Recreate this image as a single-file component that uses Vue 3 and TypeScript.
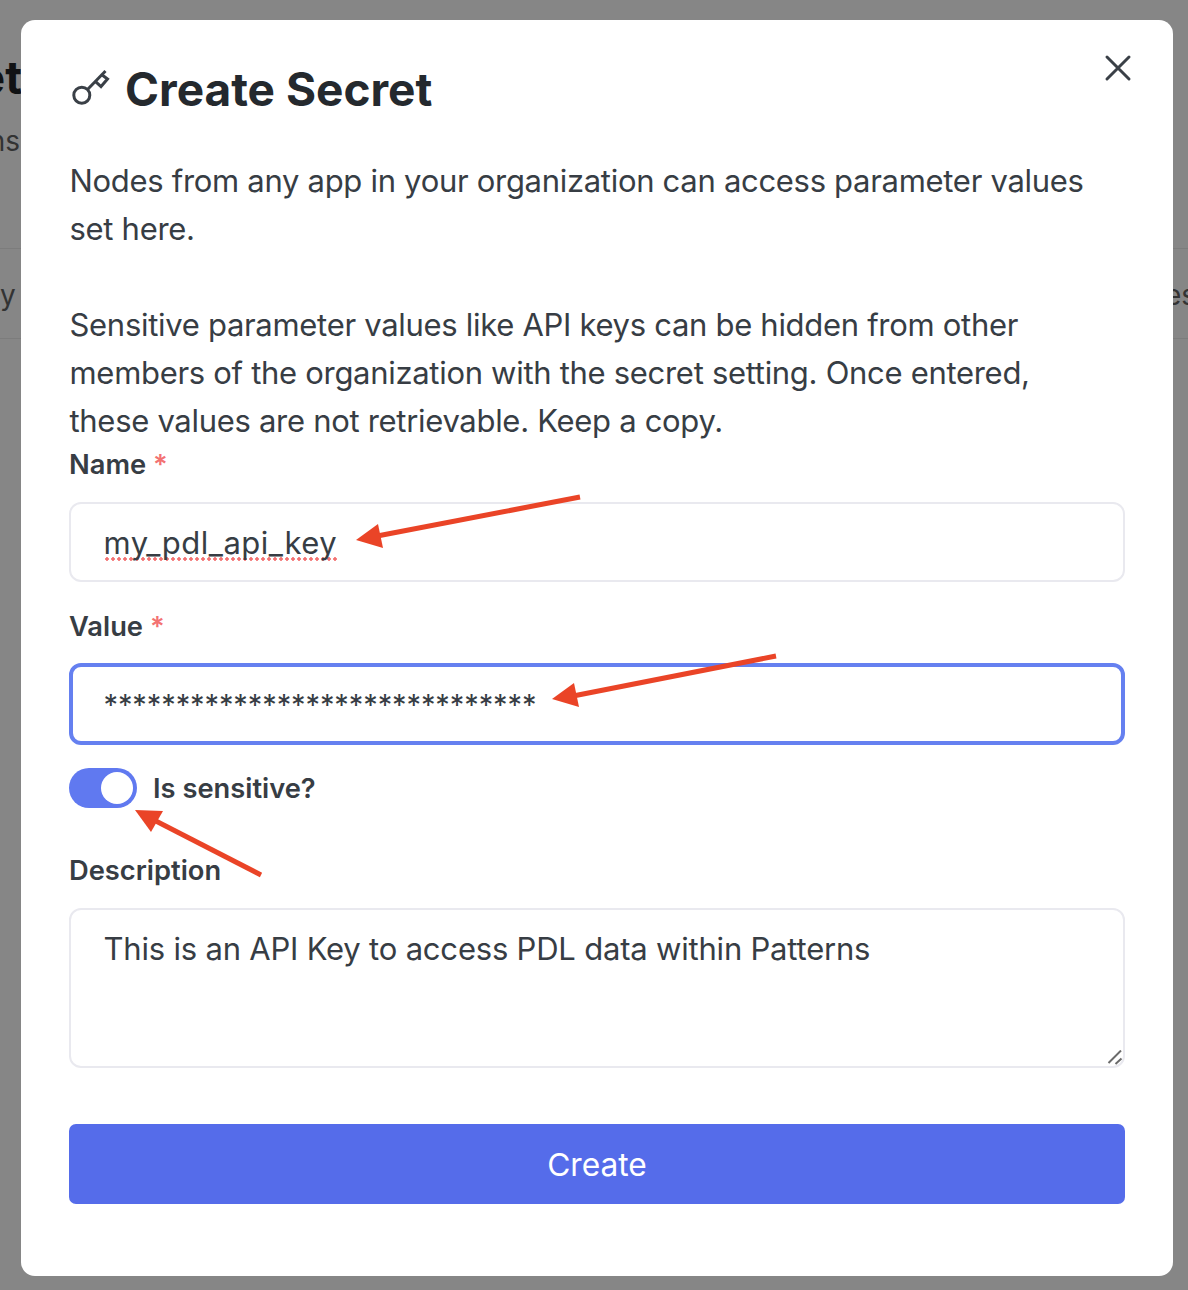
<template>
  <div class="page">
    <div class="behind">
      <span class="bg-title">et</span>
      <span class="bg-sub">ns</span>
      <span class="bg-line bg-line-top"></span>
      <span class="bg-line bg-line-bottom"></span>
      <span class="bg-cell bg-cell-left">y</span>
      <span class="bg-cell bg-cell-right">es</span>
    </div>

    <div class="modal">
      <button class="close" type="button" aria-label="Close">
        <svg width="28" height="28" viewBox="0 0 28 28" fill="none" stroke="#3a4047" stroke-width="3" stroke-linecap="round">
          <path d="M3 3 L25 25 M25 3 L3 25" />
        </svg>
      </button>

      <h1 class="title">
        <svg class="key" width="38" height="38" viewBox="0 0 38 38" fill="none" stroke="#3a4047" stroke-width="3">
          <circle cx="11.8" cy="25.2" r="8" />
          <path d="M17.5 19.5 L35.5 1" />
          <path d="M25.3 11.3 L31 16.5 L37.5 9 L31.5 4.5" />
        </svg>
        Create Secret
      </h1>

      <p class="intro">Nodes from any app in your organization can access parameter values set here.</p>
      <p class="intro gap">Sensitive parameter values like API keys can be hidden from other members of the organization with the secret setting. Once entered, these values are not retrievable. Keep a copy.</p>

      <label class="field-label name-label">Name <span class="req">*</span></label>
      <div class="text-input name-field"><span class="spell">my_pdl_api_key</span></div>

      <label class="field-label value-label">Value <span class="req">*</span></label>
      <input class="text-input focused" type="text" :value="maskedValue" spellcheck="false" />

      <div class="switch-row">
        <span class="switch"><span class="knob"></span></span>
        <span class="field-label switch-label">Is sensitive?</span>
      </div>

      <label class="field-label desc-label">Description</label>
      <div class="area-wrap">
        <textarea class="text-area" spellcheck="false">This is an API Key to access PDL data within Patterns</textarea>
        <svg class="grip" width="16" height="16" viewBox="0 0 16 16" stroke="#6b6b6b" stroke-width="2">
          <path d="M1.5 13 L14 0.5 M8.5 14 L14.5 8.5" />
        </svg>
      </div>

      <button class="create" type="button">Create</button>
    </div>

    <svg class="arrows" width="1188" height="1290" viewBox="0 0 1188 1290">
      <g v-for="a in arrows" :key="a.head">
        <path :d="a.line" stroke="#ea4427" stroke-width="5" fill="none" />
        <polygon :points="a.head" fill="#ea4427" />
      </g>
    </svg>
  </div>
</template>

<script setup lang="ts">
const maskedValue = "*".repeat(30);

const arrows = [
  { line: "M580 497 L372 537", head: "356,540 378,524 383,548" },
  { line: "M776 656 L568 697", head: "552,699 574,683 579,707" },
  { line: "M261 875 L150 818", head: "135,810 163,811 151,832" },
];
</script>

<style>
body {
  margin: 0;
}
</style>

<style scoped>
.page {
  position: relative;
  box-sizing: border-box;
  width: 1188px;
  height: 1290px;
  padding: 20px 15px 14px 21px;
  background: #868686;
  overflow: hidden;
  font-family: Inter, "Liberation Sans", sans-serif;
  color: #373d44;
}

.bg-title,
.bg-sub,
.bg-cell,
.bg-line {
  position: absolute;
}

.bg-title {
  right: 1166px;
  top: 50px;
  font-size: 46px;
  font-weight: 700;
  line-height: 54px;
  color: #101214;
}

.bg-sub {
  right: 1168px;
  top: 123px;
  font-size: 28px;
  line-height: 36px;
  color: #333;
}

.bg-line {
  left: 0;
  right: 0;
  height: 1px;
  background: #7c7c7c;
}

.bg-line-top {
  top: 248px;
}

.bg-line-bottom {
  top: 338px;
}

.bg-cell {
  top: 277px;
  font-size: 28px;
  line-height: 36px;
  color: #333;
}

.bg-cell-left {
  left: 0;
}

.bg-cell-right {
  left: 1165px;
  white-space: nowrap;
}

.modal {
  position: relative;
  box-sizing: border-box;
  height: 100%;
  padding: 39px 48px 0;
  background: #fff;
  border-radius: 14px;
  display: flex;
  flex-direction: column;
}

.close {
  position: absolute;
  top: 34px;
  right: 41px;
  padding: 0;
  border: 0;
  background: none;
  line-height: 0;
}

.title {
  margin: 0 0 38px 1px;
  display: flex;
  align-items: center;
  gap: 17px;
  height: 60px;
  font-size: 46px;
  line-height: 60px;
  font-weight: 700;
  color: #24292e;
}

.key {
  overflow: visible;
}

.intro {
  margin: 0 0 0 0.5px;
  font-size: 31px;
  letter-spacing: -0.3px;
  line-height: 48px;
}

.gap {
  margin-top: 48px;
  max-width: 1000px;
}

.field-label {
  display: block;
  font-size: 27.3px;
  line-height: 36px;
  font-weight: 600;
  color: #373d44;
}

.name-label {
  margin-top: 2px;
  margin-bottom: 19px;
}

.value-label {
  margin-top: 27px;
  margin-bottom: 18px;
}

.desc-label {
  margin-top: 45px;
  margin-bottom: 19px;
}

.req {
  color: #f37272;
}

.text-input,
.text-area {
  box-sizing: border-box;
  width: 100%;
  padding: 0 32.5px;
  border: 2px solid #e9e9ef;
  border-radius: 12px;
  outline: none;
  font-family: inherit;
  font-size: 31px;
  color: #373d44;
  background: #fff;
}

.text-input {
  height: 80px;
}

.name-field {
  display: flex;
  align-items: center;
  letter-spacing: 0.5px;
}

.spell {
  background: radial-gradient(circle, #f37272 1.5px, transparent 2px) left bottom / 6px 4px repeat-x;
}

.focused {
  height: 82px;
  padding: 0 30.5px;
  border: 4px solid #6580f0;
  font-size: 29px;
  letter-spacing: -0.1px;
}

.switch-row {
  margin-top: 23px;
  display: flex;
  align-items: center;
  gap: 16px;
}

.switch-label {
  padding-top: 2px;
}

.switch {
  box-sizing: border-box;
  width: 68px;
  height: 40px;
  padding: 4px;
  border-radius: 20px;
  background: #6079f0;
  display: flex;
  justify-content: flex-end;
}

.knob {
  width: 32px;
  height: 32px;
  border-radius: 50%;
  background: #fff;
}

.area-wrap {
  position: relative;
  height: 160px;
}

.text-area {
  display: block;
  height: 160px;
  padding-top: 19px;
  line-height: 40px;
  letter-spacing: -0.2px;
  resize: none;
}

.grip {
  position: absolute;
  right: 2px;
  bottom: 2px;
}

.create {
  margin-top: 56px;
  height: 80px;
  border: 0;
  border-radius: 7px;
  background: #556cea;
  color: #fff;
  font-family: inherit;
  font-size: 31.7px;
}

.arrows {
  position: absolute;
  inset: 0;
  pointer-events: none;
}
</style>
